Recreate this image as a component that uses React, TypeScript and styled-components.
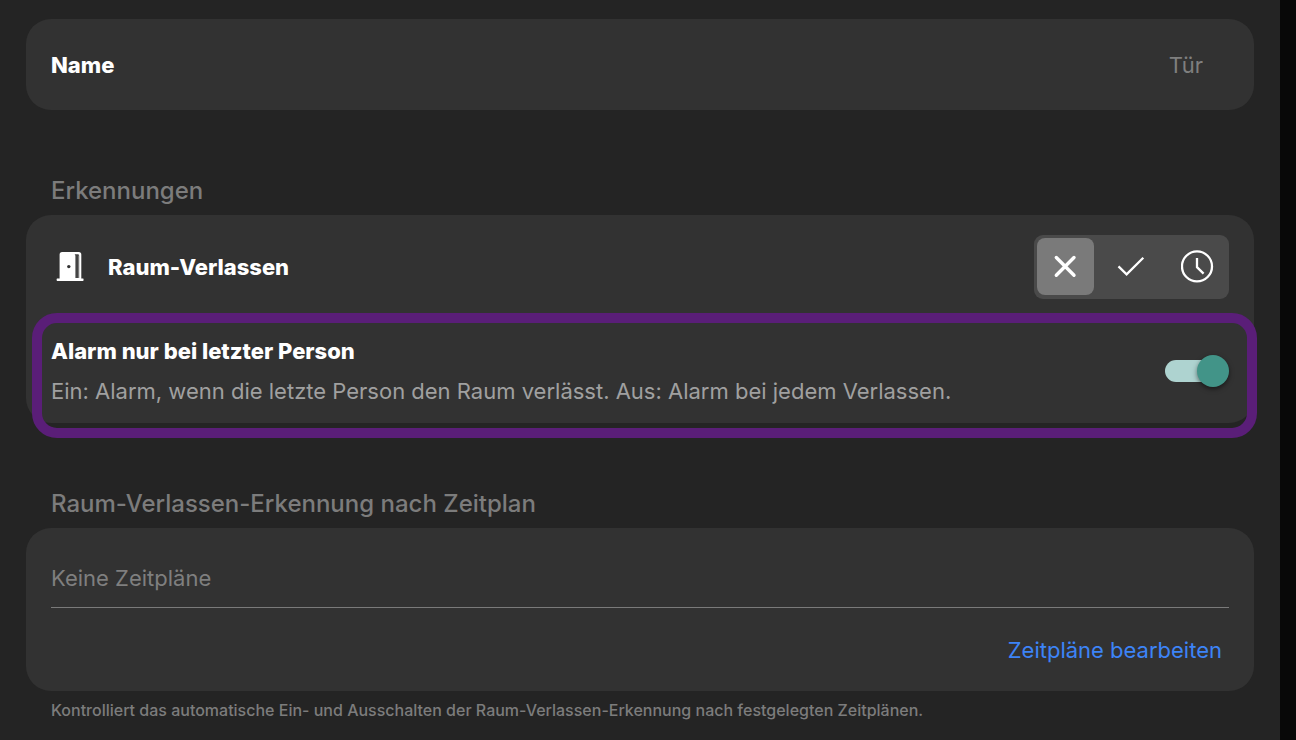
import React, { useState } from "react";
import styled, { createGlobalStyle } from "styled-components";

const GlobalStyle = createGlobalStyle`
  * { box-sizing: border-box; }
  html { background: #080808; }
  body { margin: 0; }
  body, input, button {
    font-family: Inter, "Liberation Sans", sans-serif;
  }
`;

const Page = styled.main`
  min-height: 100vh;
  margin-right: 16px;
  padding: 19px 26px;
  background: #242424;
  color: #fff;
  font-size: 22px;
  line-height: 28px;
`;

const Card = styled.section`
  background: #323232;
  border-radius: 25px;
`;

const NameCard = styled(Card)`
  display: flex;
  align-items: center;
  justify-content: space-between;
  padding: 32px 51px 31px 25px;
`;

const Label = styled.label`
  font-weight: 800;
`;

const NameInput = styled.input`
  flex: 1;
  min-width: 0;
  height: 28px;
  padding: 0;
  border: 0;
  outline: 0;
  background: transparent;
  color: #7f7f7f;
  font-size: 22px;
  text-align: right;
`;

const Heading = styled.h2`
  margin: 65px 0 8px;
  padding-left: 25px;
  color: #7c7c7c;
  font-size: 24px;
  font-weight: 500;
  line-height: 32px;
`;

const DetectionRow = styled.div`
  display: flex;
  align-items: center;
  padding: 20px 25px;
`;

const DoorIcon = styled.svg`
  width: 28px;
  height: 32px;
  margin: 0 24px 0 5px;
`;

const DetectionTitle = styled.span`
  flex: 1;
  font-weight: 800;
`;

const Segmented = styled.div`
  display: flex;
  gap: 9px;
  padding: 3px 3px 4px;
  border-radius: 9px;
  background: #4a4a4a;
`;

const Segment = styled.button<{ $active: boolean }>`
  display: grid;
  place-items: center;
  width: 57px;
  height: 57px;
  padding: 0;
  border: 0;
  border-radius: 8px;
  background: ${(p) => (p.$active ? "#7a7a7a" : "transparent")};
  color: #fff;
  cursor: pointer;
`;

const SegmentIcon = styled.svg`
  width: 33px;
  height: 33px;
  fill: none;
  stroke: currentColor;
`;

const AlarmRow = styled.div`
  position: relative;
  display: flex;
  align-items: center;
  justify-content: space-between;
  padding: 18px 25px;

  &::after {
    content: "";
    position: absolute;
    inset: -6px -3px -15px 6px;
    border: 10px solid #5a1e78;
    border-radius: 25px;
    pointer-events: none;
  }
`;

const AlarmText = styled.div`
  display: flex;
  flex-direction: column;
  gap: 12px;
`;

const Description = styled.span`
  color: #a0a0a0;
`;

const Switch = styled.input`
  appearance: none;
  position: relative;
  display: flex;
  align-items: center;
  flex: none;
  width: 64px;
  height: 32px;
  margin: 0;
  border-radius: 16px;
  cursor: pointer;

  &::before {
    content: "";
    width: 56px;
    height: 22px;
    border-radius: 11px;
    background: #777;
  }

  &::after {
    content: "";
    position: absolute;
    left: 0;
    width: 32px;
    height: 32px;
    border-radius: 50%;
    background: #bbb;
    box-shadow: 0 2px 5px rgba(0, 0, 0, 0.5);
  }

  &:checked::before { background: #aed3d0; }
  &:checked::after { left: 32px; background: #429488; }
`;

const ScheduleCard = styled(Card)`
  padding: 36px 25px 27px;
`;

const EmptyText = styled.p`
  margin: 0;
  padding-bottom: 15px;
  border-bottom: 1px solid #7a7a7a;
  color: #7f7f7f;
`;

const Actions = styled.div`
  display: flex;
  justify-content: flex-end;
  padding: 28px 7px 0;
`;

const EditLink = styled.a`
  color: #3d84f7;
  text-decoration: none;
`;

const Footnote = styled.p`
  margin: 9px 0 0;
  padding-left: 25px;
  color: #7c7c7c;
  font-size: 16px;
  font-weight: 500;
  line-height: 20px;
`;

type Mode = "off" | "on" | "schedule";

const modes: { id: Mode; label: string; icon: React.ReactNode }[] = [
  {
    id: "off",
    label: "Aus",
    icon: (
      <SegmentIcon viewBox="0 0 33 33" strokeWidth="3.4" strokeLinecap="round">
        <path d="M7.3 7.5 25 25.2M25 7.5 7.3 25.2" />
      </SegmentIcon>
    ),
  },
  {
    id: "on",
    label: "Ein",
    icon: (
      <SegmentIcon viewBox="0 0 33 33" strokeWidth="2.3">
        <path d="M3.5 16.4 11.6 24.4 28.3 7.7" />
      </SegmentIcon>
    ),
  },
  {
    id: "schedule",
    label: "Zeitplan",
    icon: (
      <SegmentIcon viewBox="0 0 33 33" strokeWidth="2.3">
        <circle cx="16" cy="16.4" r="15" />
        <path d="M16 8V17.2L22.6 23.6" />
      </SegmentIcon>
    ),
  },
];

export default function App() {
  const [name, setName] = useState("Tür");
  const [mode, setMode] = useState<Mode>("off");
  const [lastOnly, setLastOnly] = useState(true);

  return (
    <>
      <GlobalStyle />
      <Page>
        <NameCard>
          <Label htmlFor="name">Name</Label>
          <NameInput id="name" value={name} onChange={(e) => setName(e.target.value)} />
        </NameCard>

        <Heading>Erkennungen</Heading>
        <Card>
          <DetectionRow>
            <DoorIcon viewBox="0 1 28 32" aria-hidden="true">
              <path fill="#fff" d="M1 28.6h2.6V4.5Q3.6 2 6.1 2H22.8Q25.3 2 25.3 4.5V28.6H27.2Q28 29.7 27.2 31H1Q.2 29.7 1 28.6Z" />
              <path fill="#444" d="M18.6 4.2h3.2q1.3 0 1.3 1.3v22.5h-3.7V6.2q0-1.4-.8-2Z" />
              <path fill="#999" d="M22.4 5.5h.8v22.5h-.8z" />
              <circle cx="12.8" cy="16.6" r="1.7" fill="#323232" />
            </DoorIcon>
            <DetectionTitle>Raum-Verlassen</DetectionTitle>
            <Segmented role="group" aria-label="Raum-Verlassen">
              {modes.map((m) => (
                <Segment
                  key={m.id}
                  type="button"
                  $active={mode === m.id}
                  aria-pressed={mode === m.id}
                  aria-label={m.label}
                  onClick={() => setMode(m.id)}
                >
                  {m.icon}
                </Segment>
              ))}
            </Segmented>
          </DetectionRow>
          <AlarmRow>
            <AlarmText>
              <Label htmlFor="last-person">Alarm nur bei letzter Person</Label>
              <Description id="last-person-info">
                Ein: Alarm, wenn die letzte Person den Raum verlässt. Aus: Alarm bei jedem Verlassen.
              </Description>
            </AlarmText>
            <Switch
              id="last-person"
              type="checkbox"
              role="switch"
              aria-describedby="last-person-info"
              checked={lastOnly}
              onChange={(e) => setLastOnly(e.target.checked)}
            />
          </AlarmRow>
        </Card>

        <Heading>Raum-Verlassen-Erkennung nach Zeitplan</Heading>
        <ScheduleCard>
          <EmptyText>Keine Zeitpläne</EmptyText>
          <Actions>
            <EditLink href="#zeitplaene">Zeitpläne bearbeiten</EditLink>
          </Actions>
        </ScheduleCard>
        <Footnote>
          Kontrolliert das automatische Ein- und Ausschalten der Raum-Verlassen-Erkennung nach festgelegten Zeitplänen.
        </Footnote>
      </Page>
    </>
  );
}
